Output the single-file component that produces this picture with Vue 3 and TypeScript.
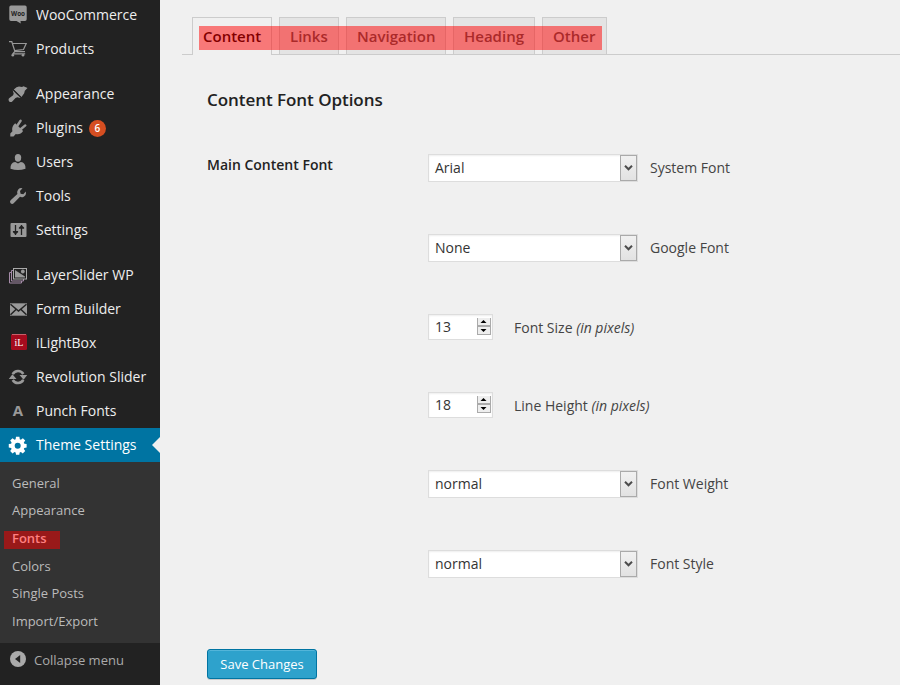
<script setup lang="ts">
import { ref } from 'vue'

interface MenuItem {
  id: string
  label: string
  badge?: number
  gap?: boolean
}

interface Field {
  kind: 'select' | 'number'
  value: string
  label: string
  note?: string
}

const menu: MenuItem[] = [
  { id: 'woo', label: 'WooCommerce' },
  { id: 'cart', label: 'Products' },
  { id: 'brush', label: 'Appearance', gap: true },
  { id: 'plug', label: 'Plugins', badge: 6 },
  { id: 'user', label: 'Users' },
  { id: 'wrench', label: 'Tools' },
  { id: 'sliders', label: 'Settings' },
  { id: 'layers', label: 'LayerSlider WP', gap: true },
  { id: 'mail', label: 'Form Builder' },
  { id: 'ilb', label: 'iLightBox' },
  { id: 'sync', label: 'Revolution Slider' },
  { id: 'letter', label: 'Punch Fonts' },
  { id: 'gear', label: 'Theme Settings' },
]

const submenu: string[] = ['General', 'Appearance', 'Fonts', 'Colors', 'Single Posts', 'Import/Export']
const tabs: string[] = ['Content', 'Links', 'Navigation', 'Heading', 'Other']
const activeTab = ref<string>('Content')

const fields: Field[] = [
  { kind: 'select', value: 'Arial', label: 'System Font' },
  { kind: 'select', value: 'None', label: 'Google Font' },
  { kind: 'number', value: '13', label: 'Font Size', note: '(in pixels)' },
  { kind: 'number', value: '18', label: 'Line Height', note: '(in pixels)' },
  { kind: 'select', value: 'normal', label: 'Font Weight' },
  { kind: 'select', value: 'normal', label: 'Font Style' },
]
</script>

<template>
  <div class="screen">
    <nav class="sidebar">
      <a
        v-for="item in menu"
        :key="item.id"
        class="item"
        :class="{ gap: item.gap, current: item.id === 'gear' }"
      >
        <svg class="icon" viewBox="0 0 20 20" width="20" height="20">
          <template v-if="item.id === 'woo'">
            <path d="M3 .5h14q1.700 0 1.700 1.700v12q0 1.700-1.700 1.700h-4.500l.3 2.600-4.300-2.600H3q-1.700 0-1.700-1.700v-12Q1.300.5 3 .5z" />
            <text x="10" y="10.800" text-anchor="middle" class="woo-text" textLength="14" lengthAdjust="spacingAndGlyphs">Woo</text>
          </template>
          <template v-else-if="item.id === 'cart'">
            <path class="line" d="M1 2.700h2.800l3.200 10h10M4.600 4.500h13.600l-2.700 6-9 1.200M6.800 12.500l-2 2.300h12.400" />
            <circle cx="4.800" cy="16.300" r="1.300" /><circle cx="15" cy="16.300" r="1.300" />
          </template>
          <template v-else-if="item.id === 'brush'">
            <path d="M8.500 3.200L11 2.500l3 .5 1.500-.8L19.500 4l-2.700 2.700-.6 2.600-2.700 3.700-7.700-7.500z" />
            <path class="cut slim" d="M5.500 5.800l7.600 7.300" />
            <path d="M4.600 6.300l8 7.700-3.200-.7-1.900.6-3 3.300q-1.700 1.600-3.300.2-1.400-1.700.2-3.300l3.700-2.900.6-1.800z" />
          </template>
          <template v-else-if="item.id === 'plug'">
            <path d="M7.200 5.200l7.900 7.900q-2.800 4.100-7.300 3l-2.300 2.400H2.300v-3l2.100-2.300Q3.200 8.500 7.200 5.200z" />
            <path class="prong" d="M9.400 7.500l3.200-4.700M13 11l4.300-3.600" />
          </template>
          <template v-else-if="item.id === 'user'">
            <path d="M10 2q3.200 0 3.200 3.500 0 4.300-3.200 4.300T6.800 5.500Q6.800 2 10 2z" />
            <path d="M2.500 16.700q-.3-6.200 4.700-6.700l2.800 1.600 2.800-1.600q5 .5 4.700 6.700-7.500 2.500-15 0z" />
          </template>
          <template v-else-if="item.id === 'wrench'">
            <path d="M17.800 5.600q.8 4.200-2.500 5.300-1.700.6-3.300-.2l-6.300 6.600q-1.600 1.300-3.100 0-1.300-1.500 0-3.100l6.800-6.300q-.8-2 .5-4Q11.400 1.200 14.500 2.300L12 5l.6 2.700 2.700.5z" />
          </template>
          <template v-else-if="item.id === 'sliders'">
            <rect x="2.500" y="3" width="16" height="14" rx="1" />
            <path class="cut" d="M7.500 5v10M13.500 5v10" />
            <path class="dark" d="M4.900 11h5.200v1.200L7.500 14.500l-2.600-2.300zM10.900 8.700h5.200V7.500L13.500 5.200l-2.600 2.300z" />
          </template>
          <template v-else-if="item.id === 'layers'">
            <path class="thin purple" d="M3.500 7.500h-2v10.500h12v-2M5.500 5.500h-2v10.500h12v-2" />
            <rect class="thin" x="5.500" y="3.500" width="13" height="10.500" />
            <path d="M7 5l4.500 3 5.500 3.500v1H7z" />
            <circle cx="14.800" cy="6.500" r="1.900" />
          </template>
          <template v-else-if="item.id === 'mail'">
            <rect x="2" y="4.300" width="17" height="12.400" />
            <path class="cut mail" d="M2.500 5.300l8 6.700 8-6.700M2.500 15.800l5.500-5.300M18.500 15.800l-5.500-5.300" />
          </template>
          <template v-else-if="item.id === 'ilb'">
            <rect class="red" x="3" y="1" width="16" height="16" rx="1.500" />
            <path class="shine" d="M4 1.500h14" />
            <text x="11" y="12.800" text-anchor="middle" class="ilb-text">iL</text>
          </template>
          <template v-else-if="item.id === 'sync'">
            <path class="ring" d="M4.700 7.200a6.100 6.100 0 0 1 10.600-.2M15.300 12.800a6.100 6.100 0 0 1-10.600.2" />
            <path d="M11.500 8h7.700L15.600 12.700zM.8 12h7.700L4.400 7.300z" />
          </template>
          <template v-else-if="item.id === 'letter'">
            <text x="10" y="15" text-anchor="middle" class="a-text">A</text>
          </template>
          <template v-else>
            <path
              fill-rule="evenodd"
              transform="translate(.3 .9) scale(.94)"
              d="M8.200 1h3.600l.4 2.500 1.200.5 2.100-1.500L18 5l-1.500 2 .6 1.300 2.400.4v3.600l-2.500.5-.5 1.200 1.500 2.100-2.600 2.500-2-1.500-1.300.5-.4 2.400H8.200l-.4-2.400-1.200-.5-2.100 1.500L2 16.100 3.500 14 3 12.800l-2.500-.5V8.700L3 8.300 3.500 7 2 5l2.500-2.500L6.600 4l1.200-.5zM10 7.300a3.200 3.200 0 1 0 0 6.400 3.200 3.200 0 0 0 0-6.400z"
            />
          </template>
        </svg>
        <span>{{ item.label }}</span>
        <span v-if="item.badge" class="badge">{{ item.badge }}</span>
      </a>

      <div class="submenu">
        <a v-for="s in submenu" :key="s" :class="{ active: s === 'Fonts' }"><span>{{ s }}</span></a>
      </div>
      <a class="collapse">
        <svg viewBox="0 0 16 16" width="16" height="16">
          <circle cx="8" cy="8" r="8" /><path class="dark" d="M10.200 4v8L5 8z" />
        </svg>
        <span>Collapse menu</span>
      </a>
    </nav>

    <main class="content">
      <div class="tabs">
        <a
          v-for="t in tabs"
          :key="t"
          class="tab"
          :class="['tab-' + t.toLowerCase(), { selected: t === activeTab }]"
          @click="activeTab = t"
        >{{ t }}</a>
        <div class="mark"></div>
      </div>
      <section class="panel">
        <h3>Content Font Options</h3>
        <div class="form">
          <h4>Main Content Font</h4>
          <div class="fields">
            <div v-for="f in fields" :key="f.label" class="field" :class="f.kind">
              <div class="control">
                <span>{{ f.value }}</span>
                <div v-if="f.kind === 'select'" class="drop">
                  <svg viewBox="0 0 9 6" width="9" height="6"><path d="M1 .8l3.500 3.500L8 .8" /></svg>
                </div>
                <div v-else class="spinner">
                  <i><svg viewBox="0 0 7 3" width="7" height="3"><path d="M.5 3l3-3 3 3z" /></svg></i>
                  <i><svg viewBox="0 0 7 3" width="7" height="3"><path d="M.5 0l3 3 3-3z" /></svg></i>
                </div>
              </div>
              <label>{{ f.label }} <em v-if="f.note">{{ f.note }}</em></label>
            </div>
          </div>
        </div>
        <button>Save Changes</button>
      </section>
    </main>
  </div>
</template>

<style>
body {
  margin: 0;
  overflow: hidden;
}
</style>

<style scoped>
* {
  box-sizing: border-box;
}
.screen {
  display: flex;
  width: 900px;
  height: 685px;
  overflow: hidden;
  background: #f0f0f0;
  color: #444;
  font: 14px/20px 'Open Sans', sans-serif;
}
.sidebar {
  flex: none;
  width: 160px;
  background: #222;
}
.item {
  display: flex;
  align-items: center;
  height: 34px;
  padding-left: 8px;
  color: #eee;
  white-space: nowrap;
}
.item:first-child {
  margin-top: -2px;
}
.item.gap {
  margin-top: 11px;
}
.item.current {
  position: relative;
  background: #0074a2;
  color: #fff;
}
.item.current::after {
  content: '';
  position: absolute;
  right: 0;
  top: 9px;
  border: 8px solid transparent;
  border-left: 0;
  border-right-color: #f0f0f0;
}
.icon {
  flex: none;
  margin-right: 8px;
  fill: #999;
}
.current .icon {
  fill: #fff;
}
.icon .line {
  fill: none;
  stroke: #999;
  stroke-width: 1.2;
}
.icon .thin {
  fill: none;
  stroke: #aaa;
}
.icon .purple {
  stroke: #a58ba8;
}
.icon .cut {
  fill: none;
  stroke: #222;
  stroke-width: 1.3;
}
.icon .slim {
  stroke-width: 0.7;
}
.icon .mail {
  stroke-width: 1.5;
}
.icon .prong {
  stroke: #999;
  stroke-width: 2.4;
  stroke-linecap: round;
}
.icon .ring {
  fill: none;
  stroke: #999;
  stroke-width: 2.6;
}
.icon .red {
  fill: #a50b1e;
}
.icon .shine {
  stroke: #c8606a;
}
.dark {
  fill: #222;
}
.woo-text {
  font: 700 7px 'Open Sans', sans-serif;
  fill: #222;
}
.ilb-text {
  font: 400 10px 'Liberation Serif', serif;
  fill: #fff;
}
.a-text {
  font: 700 15px 'Open Sans', sans-serif;
  fill: #999;
}
.badge {
  width: 17px;
  height: 17px;
  margin-left: 6px;
  border-radius: 50%;
  background: #d54e21;
  color: #fff;
  font: 600 10px/17px 'Open Sans', sans-serif;
  text-align: center;
}
.submenu {
  height: 181px;
  padding: 7px 0 0 4px;
  background: #333;
  color: #bbb;
  font-size: 13px;
}
.submenu a {
  display: flex;
  align-items: center;
  height: 28px;
}
.submenu a:nth-child(3n + 1) {
  height: 27px;
}
.submenu span {
  padding: 0 8px;
}
.submenu a:nth-child(3n + 2) span {
  margin-top: -1px;
}
.submenu .active span {
  width: 56px;
  height: 18px;
  margin-top: 3px;
  padding-right: 0;
  background: #991919;
  color: #ff8080;
  font-weight: 600;
  line-height: 15px;
}
.collapse {
  display: flex;
  align-items: center;
  height: 34px;
  padding-left: 10px;
  color: #aaa;
  font-size: 13px;
}
.collapse svg {
  margin: -2px 8px 0 0;
  fill: #aaa;
}
.content {
  flex: 1;
  padding: 17px 0 0 22px;
}
.tabs {
  position: relative;
  display: flex;
  gap: 7px;
  height: 38px;
  padding-left: 10px;
  border-bottom: 1px solid #ccc;
}
.tab {
  height: 37px;
  padding: 0 0 0 10px;
  border: 1px solid #ccc;
  border-bottom: 0;
  background: #e4e4e4;
  color: #555;
  font-size: 15px;
  font-weight: 600;
  line-height: 37px;
}
.tab.selected {
  height: 38px;
  background: #f0f0f0;
  color: #000;
}
.tab-content {
  width: 80px;
}
.tab-links {
  width: 60px;
}
.tab-navigation {
  width: 100px;
}
.tab-heading {
  width: 82px;
}
.tab-other {
  width: 65px;
}
.mark {
  position: absolute;
  left: 17px;
  top: 9px;
  width: 403px;
  height: 24px;
  background: rgba(255, 0, 0, 0.5);
}
.panel {
  padding: 35px 0 0 25px;
}
h3,
h4 {
  margin: 0;
  color: #222;
  font-weight: 600;
}
h3 {
  height: 64px;
  font-size: 17px;
  line-height: 20px;
  letter-spacing: -0.05px;
}
.form {
  display: flex;
}
h4 {
  width: 221px;
  font-size: 14px;
  line-height: 22px;
}
.field {
  display: flex;
  height: 80px;
}
.field.number {
  height: 78px;
}
.control {
  display: flex;
  justify-content: space-between;
  width: 210px;
  height: 28px;
  margin-right: 12px;
  padding-left: 6px;
  border: 1px solid #ddd;
  background: #fff;
  box-shadow: inset 0 1px 2px rgba(0, 0, 0, 0.07);
  color: #333;
  line-height: 26px;
}
.number .control {
  width: 65px;
  height: 26px;
  margin-right: 21px;
  line-height: 24px;
}
.field label {
  line-height: 28px;
}
.drop {
  display: grid;
  place-items: center;
  width: 17px;
  height: 26px;
  border: 1px solid #aaa;
  background: linear-gradient(#f1f1f1, #e2e2e2);
}
.drop path {
  fill: none;
  stroke: #4c4c4c;
  stroke-width: 2;
}
.spinner {
  width: 14px;
  height: 17px;
  margin: 3px 1px 0 0;
}
.spinner i {
  display: flex;
  align-items: center;
  height: 8px;
  padding-left: 2px;
  border: 1px solid #aaa;
  border-top: 0;
  background: #eee;
}
.spinner i + i {
  height: 9px;
  border-top: 1px solid #aaa;
}
button {
  display: block;
  width: 110px;
  height: 30px;
  margin-top: 19px;
  padding: 0;
  border: 1px solid #0074a2;
  border-radius: 3px;
  background: #2ea2cc;
  box-shadow: inset 0 1px 0 rgba(120, 200, 230, 0.5), 0 1px 0 rgba(0, 0, 0, 0.15);
  color: #fff;
  font: 13px/28px 'Open Sans', sans-serif;
}
</style>
